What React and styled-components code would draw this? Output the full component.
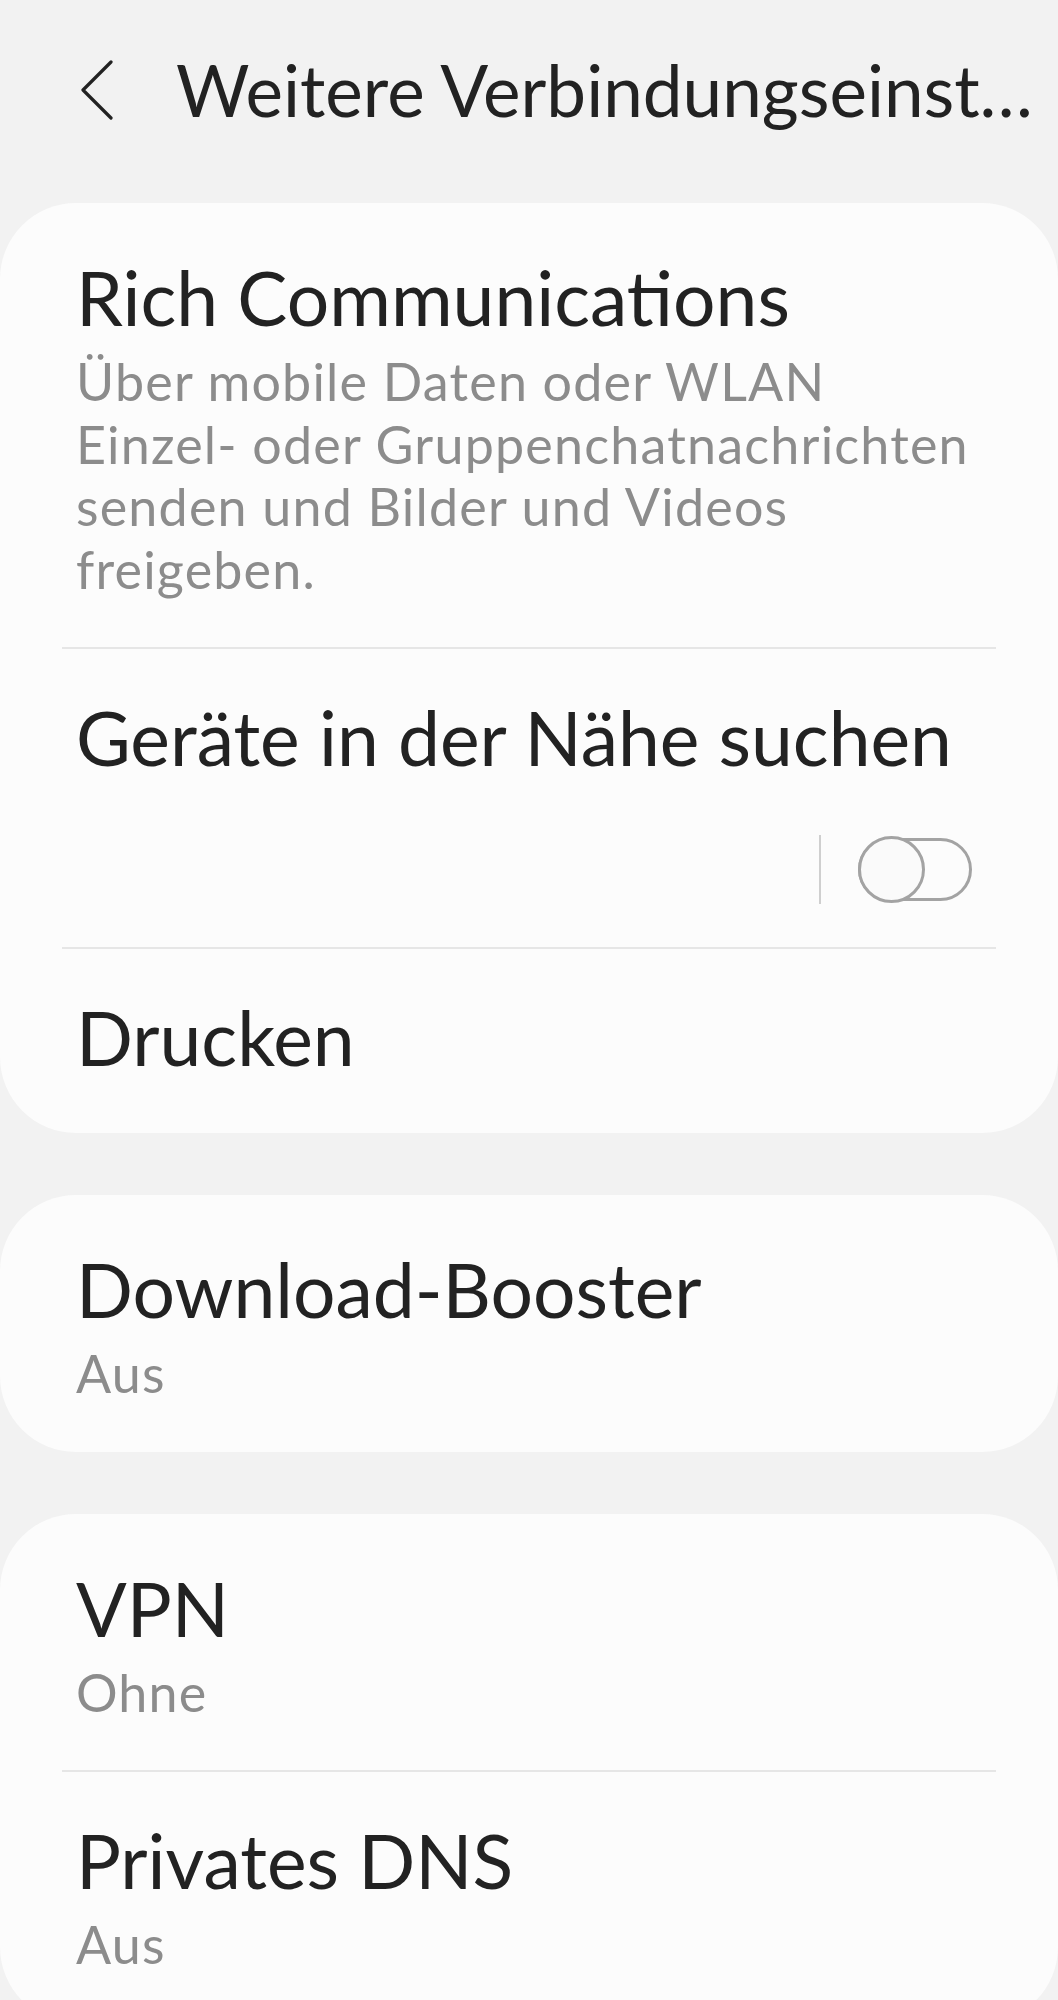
import styled, { createGlobalStyle } from "styled-components";

const GlobalStyle = createGlobalStyle`
    body {
        margin: 0;
        background: #f2f2f2;
        font-family: Lato, "Noto Sans", sans-serif;
        color: #222222;
    }
`;

const Page = styled.div`
    width: 1058px;
    min-height: 2000px;
    background: #f2f2f2;
    overflow: hidden;
`;

/* header */

const Header = styled.header`
    display: flex;
    align-items: center;
    padding: 46px 14px 69px 81px;
    height: 88px;
`;

const BackButton = styled.button`
    flex: none;
    width: 32px;
    height: 60px;
    padding: 0;
    margin-right: 63px;
    border: none;
    background: none;
    display: flex;
    align-items: center;
    justify-content: center;
    color: #222222;
`;

const HeaderTitle = styled.h1`
    margin: 0;
    min-width: 0;
    font-size: 71px;
    line-height: 88px;
    font-weight: 400;
    white-space: nowrap;
    overflow: hidden;
    text-overflow: ellipsis;
`;

/* cards */

const CardList = styled.div`
    display: flex;
    flex-direction: column;
    gap: 62px;
`;

const Card = styled.section`
    background: #fcfcfc;
    border-radius: 76px;
    padding-top: 6px;
`;

const Row = styled.div`
    padding: 44px 76px ${(p) => p.$pb || 47}px 76px;
`;

const Divider = styled.div`
    height: 2px;
    margin: 0 62px;
    background: #e6e6e6;
`;

const RowTitle = styled.div`
    font-size: 75px;
    line-height: 88px;
    color: #222222;
    white-space: nowrap;
`;

const RowSummary = styled.div`
    margin-top: 9px;
    font-size: 52px;
    line-height: 62.5px;
    letter-spacing: 1.2px;
    color: #8c8c8c;
`;

const SwitchLine = styled.div`
    display: flex;
    justify-content: flex-end;
    align-items: center;
    margin-top: 54px;
    padding-right: 10px;
`;

const SwitchDivider = styled.div`
    width: 2px;
    height: 69px;
    background: #cfcfcf;
    margin-right: 37px;
`;

const Switch = styled.div`
    position: relative;
    width: 114px;
    height: 67px;
`;

const SwitchTrack = styled.div`
    position: absolute;
    left: 0;
    top: 2px;
    width: 114px;
    height: 63px;
    box-sizing: border-box;
    border: 3px solid #a3a3a3;
    border-radius: 32px;
`;

const SwitchKnob = styled.div`
    position: absolute;
    left: ${(p) => (p.$on ? "47px" : "0")};
    top: 0;
    width: 67px;
    height: 67px;
    box-sizing: border-box;
    border: 3px solid #a3a3a3;
    border-radius: 50%;
    background: #fafafa;
`;

function ChevronLeft() {
    return (
        <svg width="32" height="60" viewBox="0 0 32 60" fill="none">
            <path d="M30 2 L2 30 L30 58" stroke="currentColor" strokeWidth="3.2" strokeLinecap="round" strokeLinejoin="round" />
        </svg>
    );
}

function SettingRow({ title, summary, pb, children }) {
    return (
        <Row $pb={pb}>
            <RowTitle>{title}</RowTitle>
            {summary && (
                <RowSummary>
                    {summary.map((line, i) => (
                        <span key={i}>
                            {line}
                            {i < summary.length - 1 && <br />}
                        </span>
                    ))}
                </RowSummary>
            )}
            {children}
        </Row>
    );
}

const groups = [
    [
        {
            title: "Rich Communications",
            summary: [
                "Über mobile Daten oder WLAN",
                "Einzel- oder Gruppenchatnachrichten",
                "senden und Bilder und Videos",
                "freigeben.",
            ],
        },
        { title: "Geräte in der Nähe suchen", toggle: true, pb: 43 },
        { title: "Drucken", pb: 52 },
    ],
    [{ title: "Download-Booster", summary: ["Aus"] }],
    [
        { title: "VPN", summary: ["Ohne"] },
        { title: "Privates DNS", summary: ["Aus"] },
    ],
];

export default function App() {
    return (
        <Page>
            <GlobalStyle />
            <Header>
                <BackButton aria-label="Zurück">
                    <ChevronLeft />
                </BackButton>
                <HeaderTitle>Weitere Verbindungseinstellungen</HeaderTitle>
            </Header>
            <CardList>
                {groups.map((items, g) => (
                    <Card key={g}>
                        {items.map((item, i) => (
                            <div key={item.title}>
                                {i > 0 && <Divider />}
                                <SettingRow title={item.title} summary={item.summary} pb={item.pb}>
                                    {item.toggle && (
                                        <SwitchLine>
                                            <SwitchDivider />
                                            <Switch>
                                                <SwitchTrack />
                                                <SwitchKnob $on={false} />
                                            </Switch>
                                        </SwitchLine>
                                    )}
                                </SettingRow>
                            </div>
                        ))}
                    </Card>
                ))}
            </CardList>
        </Page>
    );
}
